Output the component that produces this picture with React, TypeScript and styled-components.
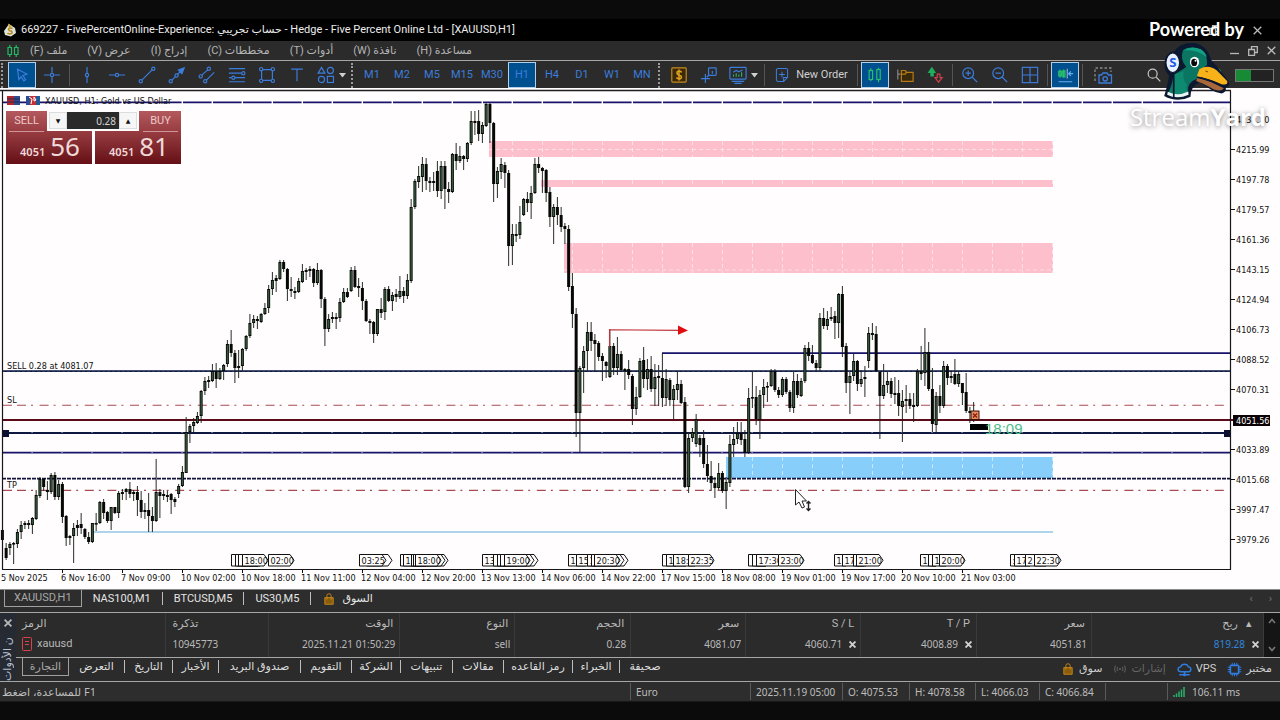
import React from "react";
import styled, { createGlobalStyle, css } from "styled-components";

const uiFont = '"Roboto", "DejaVu Sans", sans-serif';
const numFont = '"Noto Sans", "DejaVu Sans", sans-serif';
const chartFont = '"DejaVu Sans Condensed", "DejaVu Sans", sans-serif';

const Global = createGlobalStyle`
  * { box-sizing: border-box; }
  body { margin: 0; background: #0b0b0b; color: #d4d4d4; font: 11px/16px ${uiFont}; }
  button, input { font: inherit; color: inherit; }
  a { color: inherit; text-decoration: none; }
`;

const Page = styled.div`
  position: relative;
  padding-top: 19px;
  min-width: 1180px;
  overflow: hidden;
`;

const TitleBar = styled.header`
  display: flex;
  align-items: center;
  gap: 4px;
  height: 22px;
  padding: 0 18px 0 3px;
  background: #000;
  color: #ececec;
`;
const TitleText = styled.h1`
  margin: 0;
  flex: 1;
  font-size: 11px;
  font-weight: 400;
`;
const WindowButtons = styled.div`
  display: flex;
  align-items: center;
  gap: ${(p: { $gap: number }) => p.$gap}px;
`;
const GlyphButton = styled.button`
  display: flex;
  padding: 0;
  border: 0;
  background: none;
  color: #b8b8b8;
`;

const MenuBar = styled.nav`
  display: flex;
  align-items: center;
  height: 19px;
  padding: 0 4px 0 7px;
  background: #2b2b2b;
`;
const MenuList = styled.div`
  display: flex;
  flex: 1;
  gap: 20px;
  margin-left: 11px;
`;
const MenuItem = styled.button`
  padding: 0;
  border: 0;
  background: none;
  color: #b4b4b4;
`;

const Toolbar = styled.div`
  display: flex;
  align-items: center;
  height: 28px;
  padding-top: 1px;
  border-top: 1px solid #a6a6a6;
  background: #2b2b2b;
`;
const Grip = styled.span`
  width: 7px;
  height: 25px;
  border-left: 2px dotted #9a9a9a;
  margin-left: 1px;
  margin-right: -1px;
`;
const Divider = styled.span`
  width: 1px;
  height: 22px;
  margin: 0 2px;
  background: #555;
`;
const ToolButton = styled.button<{ $on?: boolean; $w?: number }>`
  display: flex;
  align-items: center;
  justify-content: center;
  gap: 4px;
  width: ${(p) => (p.$w ?? 30) - 2}px;
  height: 26px;
  margin: 0 1px;
  padding: 0;
  border: 1px solid transparent;
  background: none;
  color: #3b7ddd;
  white-space: nowrap;
  ${(p) =>
    p.$on &&
    css`
      border-color: #b5cfe6;
      background: #00508f;
    `}
`;
const OrderLabel = styled.span`
  margin-left: 2px;
  color: #d0d0d0;
`;
const ToolEnd = styled.div`
  display: flex;
  align-items: center;
  gap: 10px;
  margin-left: auto;
  padding-right: 6px;
`;
const SearchSlot = styled.div`
  display: flex;
  margin-right: 36px;
`;
const Battery = styled.div`
  width: 39px;
  height: 13px;
  border: 1px solid #777;
  background: linear-gradient(90deg, #178a35 40%, #222 40%);
`;

const ChartArea = styled.main`
  position: relative;
  background: #fffdfd;
`;
const ChartSvg = styled.svg`
  display: block;
  width: 100%;
  height: auto;
  font: 9px ${chartFont};
`;

const TradePanel = styled.section`
  position: absolute;
  left: 6px;
  top: 23px;
  display: flex;
  gap: 3px;
`;
const DealButton = styled.button<{ $right?: boolean }>`
  display: flex;
  flex-direction: column;
  justify-content: space-between;
  width: 86px;
  height: 53px;
  padding: 2px 3px 0;
  border: 0;
  background: linear-gradient(#b4595d, #963c41 40%, #651016);
  color: #efd9d9;
  align-items: ${(p) => (p.$right ? "flex-end" : "flex-start")};
`;
const DealSide = styled.span`
  width: 35px;
  padding-bottom: 2px;
  border-bottom: 1px solid #cf9497;
  line-height: 16px;
  text-align: center;
  color: #ecc9c9;
`;
const DealPrice = styled.span`
  display: flex;
  align-items: baseline;
  align-self: stretch;
  justify-content: flex-end;
  gap: 5px;
  padding-right: 9px;
  font: 600 11px/28px ${numFont};
  b {
    font: 400 26px/28px ${numFont};
  }
`;
const VolumeBox = styled.div`
  position: absolute;
  left: 41px;
  top: 0;
  display: flex;
  width: 92px;
  height: 20px;
  padding: 1px 2px 2px;
  background: #fffdfd;
`;
const StepButton = styled.button`
  width: 18px;
  padding: 0;
  border: 1px solid #ddd;
  background: #f6f6f6;
  color: #111;
  font-size: 6px;
  line-height: 14px;
`;
const VolumeInput = styled.input`
  flex: 1;
  min-width: 0;
  padding: 0 3px;
  border: 0;
  background: #2a2a2a;
  color: #d5d5d5;
  text-align: right;
  font: 10px ${numFont};
`;

const Brand = styled.aside`
  position: absolute;
  top: 17px;
  right: 14px;
  display: flex;
  flex-direction: column;
  align-items: flex-end;
  color: #fff;
  pointer-events: none;
`;
const BrandTop = styled.span`
  padding-right: 22px;
  font: 700 18px/24px "Lato", sans-serif;
`;
const BrandName = styled.span`
  font: 400 24px/34px "Open Sans", sans-serif;
  color: #fff;
  text-shadow: 0 1px 5px rgba(0, 0, 0, 0.5);
  b {
    font-weight: 700;
  }
`;
const Duck = styled.svg`
  width: 67px;
  height: 59px;
  margin-right: 36px;
`;

const ChartTabs = styled.nav`
  display: flex;
  align-items: flex-start;
  height: 24px;
  padding: 0 8px 0 4px;
  border-top: 1px solid #8a8a8a;
  border-bottom: 1px solid #a6a6a6;
  background: #2d2d2d;
`;
const ChartTab = styled.button<{ $on?: boolean }>`
  display: flex;
  align-items: center;
  gap: 6px;
  height: 17px;
  padding: 0 ${(p) => (p.$on ? 9 : 11)}px;
  border: ${(p) => (p.$on ? "1px solid #a0a0a0" : "0")};
  border-top: 0;
  background: none;
  color: ${(p) => (p.$on ? "#a8a8a8" : "#e6e6e6")};
`;
const TabRule = styled.span`
  width: 1px;
  height: 13px;
  margin-top: 2px;
  background: #bdbdbd;
`;
const TabArrows = styled.div`
  display: flex;
  gap: 16px;
  margin-left: auto;
  color: #777;
  line-height: 18px;
`;

const Toolbox = styled.section`
  display: flex;
  height: 68px;
  background: #2b2b2b;
`;
const SideStrip = styled.div`
  display: flex;
  flex-direction: column;
  align-items: center;
  width: 16px;
  padding-top: 6px;
  overflow: hidden;
  background: #262a33;
  color: #e8e8e8;
`;
const SideLabel = styled.span`
  height: 52px;
  margin-top: 3px;
  overflow: hidden;
  writing-mode: vertical-rl;
  transform: rotate(180deg);
  white-space: nowrap;
  color: #b9c1d0;
  line-height: 14px;
`;
const ToolboxMain = styled.div`
  flex: 1;
  min-width: 0;
`;
const TableRow = styled.div`
  display: flex;
  height: 45px;
  border-bottom: 1px solid #a6a6a6;
`;
const Trades = styled.table`
  flex: 1;
  table-layout: fixed;
  border-collapse: collapse;
  color: #b9b9b9;
  font: 10px/16px ${numFont};
  th,
  td {
    height: 20px;
    padding: 0 4px 2px 6px;
    border-right: 1px solid #3a3a3a;
    text-align: right;
    font-weight: 400;
    white-space: nowrap;
  }
  th {
    padding: 2px 6px 0;
    font: 11px/16px ${uiFont};
  }
  th:nth-child(-n + 2),
  td:nth-child(-n + 2) {
    text-align: left;
  }
`;
const SymbolCell = styled.span`
  display: flex;
  align-items: center;
  gap: 5px;
  font: 11px/16px ${uiFont};
`;
const CloseMark = styled.button`
  margin: 0 0 0 7px;
  padding: 0;
  border: 0;
  background: none;
  color: #d0d0d0;
  svg {
    display: block;
  }
`;
const Profit = styled.span`
  color: #2f86dd;
`;
const ScrollRail = styled.div`
  display: flex;
  flex-direction: column;
  justify-content: space-between;
  align-items: center;
  width: 16px;
  padding: 5px 0;
  background: #151515;
  color: #777;
`;
const BottomTabs = styled.nav`
  display: flex;
  align-items: flex-start;
  height: 23px;
  padding-left: 6px;
`;
const BottomTab = styled.button<{ $on?: boolean; $w: number }>`
  width: ${(p) => p.$w}px;
  height: 18px;
  padding: 0;
  border: ${(p) => (p.$on ? "1px solid #a0a0a0" : "0")};
  border-top: 0;
  background: none;
  color: ${(p) => (p.$on ? "#a8a8a8" : "#dedede")};
  line-height: 16px;
  white-space: nowrap;
`;
const Services = styled.div`
  display: flex;
  gap: 11px;
  margin: 2px 8px 0 auto;
`;
const Service = styled.a<{ $dim?: boolean }>`
  display: flex;
  align-items: center;
  gap: 4px;
  height: 18px;
  color: ${(p) => (p.$dim ? "#666" : "#cfcfcf")};
`;
const ServiceIcon = styled.span`
  display: flex;
  color: #2f7de0;
`;

const StatusBar = styled.footer`
  display: grid;
  grid-template-columns: 630fr 120fr 92fr 67fr 66fr 64fr 66fr 62fr 113fr;
  align-items: center;
  height: 21px;
  border-top: 1px solid #a6a6a6;
  border-bottom: 1px solid #1a1a1a;
  background: #2d2d2d;
  color: #bdbdbd;
  font: 10px/16px ${numFont};
`;
const StatusCell = styled.span`
  display: flex;
  align-items: center;
  gap: 7px;
  height: 17px;
  padding-left: 5px;
  border-left: 1px solid #5a5a5a;
  white-space: nowrap;
  &:first-child {
    padding-left: 2px;
    border-left: 0;
    font-size: 11px;
  }
`;

/* Each candle: wick top, body top, body bottom, wick bottom. */
const CANDLES = `530 530 540 540|543 548 558 560|542 544 548 555|542 543 544 564|529 532 544 548|521 525 532 539|521 523 525 529|520 523 525 529|517 518 525 534|490 495 519 520|477 479 496 498|478 479 487 491|481 490 492 500|473 475 492 494|472 475 497 500|480 484 497 500|482 484 517 523|515 516 538 546|535 536 538 545|523 528 536 563|520 525 528 536|513 524 528 534|528 529 537 539|532 537 542 544|523 523 542 543|513 523 524 531|501 502 523 524|499 502 513 519|511 512 521 523|507 507 521 530|507 507 513 514|491 493 513 518|489 492 494 500|488 489 492 500|482 489 494 498|490 492 494 501|486 492 500 516|491 500 512 518|503 510 512 519|493 510 516 532|507 516 521 532|459 492 521 522|489 492 496 518|490 494 496 500|491 495 497 502|493 494 500 514|497 499 502 507|484 486 494 498|466 472 486 487|417 432 473 473|424 426 432 443|418 422 426 432|412 416 423 424|390 391 416 423|377 381 391 395|376 380 382 388|364 371 381 382|363 371 379 388|368 371 379 380|364 365 371 380|340 344 364 367|330 344 353 357|350 353 368 383|350 366 368 378|348 349 366 371|335 336 349 351|314 323 336 338|315 319 323 328|316 319 321 329|313 314 322 323|303 308 314 315|285 289 308 313|272 280 289 295|275 278 281 292|260 262 279 280|260 262 269 272|268 269 289 301|277 289 291 297|287 291 293 299|278 281 292 293|264 271 282 283|268 270 272 280|266 269 271 277|268 269 283 287|263 270 283 285|269 270 299 308|297 299 329 346|314 319 329 332|312 317 319 323|313 317 319 329|298 302 318 322|288 292 302 303|288 292 297 298|267 270 291 292|266 270 287 288|278 286 288 297|282 288 301 310|299 301 321 322|319 321 323 334|321 322 334 343|309 309 334 336|298 309 313 318|287 289 312 320|286 289 301 302|292 295 301 311|289 294 297 302|276 291 297 299|287 291 296 303|274 280 296 299|199 207 281 283|179 181 207 209|166 176 182 188|157 164 177 192|158 164 181 190|177 181 183 192|172 181 183 191|161 171 191 197|161 166 191 199|161 166 189 209|182 189 192 203|153 154 192 193|143 154 161 170|146 156 161 163|155 156 159 170|142 143 159 162|111 121 143 145|111 121 123 135|110 121 134 141|122 125 134 143|103 104 126 127|103 104 123 143|122 123 184 202|167 171 184 198|158 164 172 179|162 165 173 188|170 173 246 266|224 234 246 265|224 234 236 242|206 222 235 239|198 199 215 216|192 199 203 212|186 193 203 219|158 164 193 194|157 164 168 173|167 168 171 193|169 170 193 202|187 192 217 227|204 207 217 244|197 207 215 225|207 215 227 232|223 226 229 244|225 229 287 291|273 286 314 328|308 314 413 437|366 368 413 452|346 351 368 393|322 332 351 372|322 332 341 351|334 340 344 372|341 343 357 361|353 356 361 381|361 362 366 378|329 346 377 378|343 346 368 375|337 354 368 375|351 354 370 372|368 369 371 390|360 369 375 379|374 376 409 425|387 397 409 415|358 361 397 398|347 360 379 388|359 369 379 390|356 369 389 392|364 377 389 406|365 376 378 406|353 378 398 407|369 379 398 406|378 380 400 406|385 389 400 419|371 384 390 400|380 384 403 404|397 402 487 488|432 438 487 493|428 432 438 442|414 419 444 447|435 438 445 457|430 438 464 468|445 464 476 482|461 476 483 491|477 483 488 498|463 473 488 490|471 473 491 493|477 482 491 509|435 444 483 487|427 439 445 457|422 433 439 444|422 433 440 445|430 439 453 457|388 398 453 454|371 397 398 408|386 397 419 425|390 395 420 439|379 387 395 408|382 386 387 402|369 371 386 387|369 371 390 392|387 390 395 398|377 379 395 397|377 379 392 394|390 392 408 412|371 381 408 413|374 381 395 398|378 381 396 397|345 348 381 383|342 348 356 361|345 355 363 364|360 363 368 371|313 318 368 371|308 318 326 329|311 319 326 330|307 317 319 321|311 316 323 339|293 294 323 338|286 294 347 357|343 346 383 393|372 376 383 414|354 361 376 381|360 361 384 391|370 379 384 387|366 377 379 397|327 333 361 368|323 333 335 340|326 334 371 372|371 372 396 439|364 385 396 399|372 381 385 393|378 381 394 398|377 393 395 404|380 393 406 416|390 401 407 442|385 399 401 413|393 399 406 409|393 405 407 422|369 371 406 407|346 371 374 380|328 352 373 386|342 352 389 391|368 389 424 432|392 396 425 432|385 396 406 413|361 366 406 408|364 366 378 385|372 376 378 383|359 374 384 385|371 374 384 387|383 383 393 405|373 392 411 413|407 411 413 423|402 412 417 422`
  .split("|")
  .map((c) => c.split(" ").map(Number));

function Candles() {
  let close = 530;
  return (
    <g>
      {CANDLES.map(([hi, top, bottom, lo], i) => {
        const x = 2.4 + i * 3.75;
        const up = Math.abs(bottom - close) < Math.abs(top - close);
        close = up ? top : bottom;
        const h = Math.max(bottom - top, 1.6);
        return (
          <g key={i}>
            <line x1={x} x2={x} y1={hi} y2={lo} stroke="#1c221c" strokeWidth={0.95} />
            <rect x={x - 1.5} y={top} width={3} height={h} fill="#050805" />
            {up && h > 3 && <rect x={x - 0.7} y={top + 1} width={1.4} height={h - 2} fill="#35563b" />}
          </g>
        );
      })}
    </g>
  );
}

/* Economic events: left edge, label, right edge. */
const EVENTS: [number, string, number][] = [
  [231, "", 262], [235, "", 262], [238, "", 264], [242, "18:00", 268], [268, "02:00", 294],
  [366, "", 392], [359, "03:25", 386],
  [400, "", 430], [403, "1", 430], [411, "", 448], [413, "", 445], [415, "18:00", 441],
  [482, "13", 510], [493, "", 520], [497, "", 538], [500, "", 534], [504, "19:00", 530],
  [568, "1", 590], [576, "15", 600], [587, "1", 628], [591, "", 624], [594, "20:30", 620],
  [662, "", 680], [666, "1", 690], [673, "18:", 699], [688, "22:35", 714],
  [748, "", 770], [752, "", 770], [756, "17:30", 782], [778, "23:00", 804],
  [834, "1", 850], [842, "17", 868], [853, "", 870], [856, "21:00", 883],
  [920, "1", 940], [928, "", 940], [932, "1", 950], [939, "20:00", 965],
  [1010, ":", 1030], [1014, "17", 1034], [1025, "2", 1050], [1034, "22:30", 1061],
];

const PRICES = ["4234.20", "4215.99", "4197.78", "4179.57", "4161.36", "4143.15", "4124.94", "4106.73", "4088.52", "4070.31", "", "4033.89", "4015.68", "3997.47", "3979.26"];
const TIMES = ["5 Nov 2025", "6 Nov 16:00", "7 Nov 09:00", "10 Nov 02:00", "10 Nov 18:00", "11 Nov 11:00", "12 Nov 04:00", "12 Nov 20:00", "13 Nov 13:00", "14 Nov 06:00", "14 Nov 22:00", "17 Nov 15:00", "18 Nov 08:00", "19 Nov 01:00", "19 Nov 17:00", "20 Nov 10:00", "21 Nov 03:00"];
const GRID = Array.from({ length: 41 }, (_, i) => 32 + i * 30).filter((x) => x < 1230);

const ZONES = [
  { x: 489, y: 141, h: 16, fill: "#fdbfcc", mid: 149.5 },
  { x: 541, y: 180, h: 7, fill: "#fdbfcc", mid: 0 },
  { x: 564, y: 243, h: 30, fill: "#fdbfcc", mid: 270 },
  { x: 726, y: 457, h: 21, fill: "#87cefa", mid: 0 },
];

function PriceChart() {
  return (
    <ChartSvg viewBox="0 88 1280 501" role="img" aria-label="XAUUSD H1">
      <rect x="0" y="88" width="1280" height="501" fill="#fffdfd" />
      <path d="M0 90.5H1231" stroke="#221c22" strokeWidth="1.4" />
      {ZONES.map((z) => (
        <g key={z.y}>
          <rect x={z.x} y={z.y} width={1053 - z.x} height={z.h} fill={z.fill} />
          {z.mid > 0 && <line x1={z.x} x2={1053} y1={z.mid} y2={z.mid} stroke="#ffe6ea" strokeOpacity="0.8" strokeDasharray="4 3" />}
          {GRID.filter((x) => x > z.x && x < 1060).map((x) => (
            <line key={x} x1={x + 0.5} x2={x + 0.5} y1={z.y} y2={z.y + z.h} stroke="#fff" strokeOpacity="0.5" strokeDasharray="4 3" />
          ))}
        </g>
      ))}
      <path d="M93 532H1053" stroke="#93c6e6" strokeWidth="1.6" />
      <g stroke="#17136b" strokeWidth="1.8">
        <path d="M2 102.3H1231M662 353.2H1231M2 452.7H1231" />
        <path d="M2 371.2H1231M2 433H1231" stroke="#0d1740" />
        <path d="M2 478.7H1231" stroke="#12123f" strokeDasharray="4 1" />
      </g>
      <path d="M2 371.2H1231" stroke="#47607c" strokeWidth="0.6" strokeDasharray="3 2" />
      {GRID.map((x) => (
        <g key={x} fill="#fffdfd">
          <rect x={x - 0.4} y={101} width={1.4} height={3} />
          <rect x={x - 0.4} y={432} width={1} height={1} fillOpacity="0.7" />
          <rect x={x - 0.4} y={452} width={1} height={1} fillOpacity="0.7" />
        </g>
      ))}
      <g stroke="#a94b55" strokeWidth="1.1" strokeDasharray="9 5 2 6.6">
        <path d="M17 405.3H1226M17 490.4H1226" />
        <path d="M2 405.3H12M2 490.4H12" strokeDasharray="none" />
      </g>
      <path d="M2 420H1233" stroke="#5c0a17" strokeWidth="1.8" />
      <Candles />
      <g fill="#0b1033">
        <rect x="2" y="430" width="7" height="7" />
        <rect x="1224" y="430" width="7" height="7" />
      </g>
      <path d="M609.5 347V329.7L680 330.4" fill="none" stroke="#c0343b" strokeWidth="1.1" />
      <path d="M678 325.5L688 330.4L678 334.8Z" fill="#e00d10" />
      <g>
        <rect x="971" y="411" width="8" height="8.5" fill="#e98a5c" stroke="#3a1408" />
        <path d="M973 413.5l4 4m0-4l-4 4" stroke="#8a1a10" strokeWidth="1.2" />
        <rect x="970" y="424" width="18" height="6" fill="#000" />
        <text x="985" y="433.5" fill="#4dbd8a" fontFamily='"Liberation Sans", sans-serif' fontSize="15">18:09</text>
      </g>
      <g fill="#111">
        <text x="7" y="369">SELL 0.28 at 4081.07</text>
        <text x="7" y="403">SL</text>
        <text x="7" y="488">TP</text>
        <text x="45" y="104">XAUUSD, H1: Gold vs US Dollar</text>
      </g>
      <g>
        <rect x="7" y="96" width="13" height="9" fill="#b3262f" />
        <rect x="14" y="96" width="6" height="9" fill="#2c4c8d" />
        <path d="M7 99h13M7 102h13" stroke="#222a55" />
        <rect x="26" y="96" width="4" height="9" fill="#2c4c8d" />
        <rect x="30" y="96" width="6" height="9" fill="#c2303a" />
        <rect x="36" y="96" width="4" height="9" fill="#205a96" />
        <path d="M29 97l3 2-1 5M34 97l2 3-2 1z" stroke="#fff" fill="none" />
      </g>
      <path d="M2.5 91V569.5M1230.5 91V569.5M2 569.5H1231" stroke="#16161a" strokeWidth="1.2" fill="none" />
      {EVENTS.map(([x, label, end]) => (
        <g key={x}>
          <path d={`M${x + 0.5} 554.5H${end - 4}L${end} 560.3L${end - 4} 566H${x + 0.5}Z`} fill="#fffdfd" stroke="#111" />
          {label && <text x={x + 2.5} y="563.6" fill="#111">{label}</text>}
        </g>
      ))}
      {TIMES.map((t, i) => (
        <g key={t}>
          {i > 0 && <path d={`M${2.5 + i * 60} 569V573`} stroke="#111" />}
          <text x={1 + i * 60} y="581" fill="#111">{t}</text>
        </g>
      ))}
      {PRICES.map((p, i) =>
        p ? (
          <g key={p}>
            <path d={`M1230 ${119.5 + i * 30}H1235`} stroke="#111" />
            <text x="1236" y={122.7 + i * 30} fill="#111">{p}</text>
          </g>
        ) : null
      )}
      <rect x="1233" y="415" width="37" height="11" fill="#0a0204" />
      <text x="1236" y="423.7" fill="#fff">4051.56</text>
      <g stroke="#222" fill="#fff" strokeWidth="1">
        <path d="M795.5 489.5V505L799 502L802 508L804.5 507L802 501H806.5Z" />
        <path d="M808.5 502V510M806.5 503.5L808.5 501.5L810.5 503.5M806.5 508.5L808.5 510.5L810.5 508.5" fill="none" strokeWidth="1.4" />
      </g>
    </ChartSvg>
  );
}

const ICONS: Record<string, React.ReactNode> = {
  cursor: <path d="M5 3.500L15.500 9L11 10.500L14 15L12 16.500L9 12L6.500 15Z" />,
  cross: <><path d="M10 1V7.500M10 12.500V19M1 10H7.500M12.500 10H19" /><circle cx="10" cy="10" r="1.800" /></>,
  vline: <><path d="M10 1V8M10 12V19" /><circle cx="10" cy="10" r="1.800" /></>,
  hline: <><path d="M1 10H8M12 10H19" /><circle cx="10" cy="10" r="1.800" /></>,
  trend: <><path d="M4.300 15.700L15.700 4.300" /><circle cx="3" cy="17" r="1.800" /><circle cx="17" cy="3" r="1.800" /></>,
  arrow: <><path d="M4.300 15.700L8.200 11.800M10.800 9.200L15 5" /><path d="M18 2L11.500 4.500L15.500 8.500Z" fill="currentColor" /><circle cx="3" cy="17" r="1.800" /><circle cx="9.500" cy="10.500" r="1.800" /></>,
  channel: <><path d="M4.200 10.200L10.800 4.300M9.300 15.700L18 7" /><circle cx="3" cy="11.500" r="1.800" /><circle cx="12" cy="3" r="1.800" /><circle cx="8" cy="17" r="1.800" /></>,
  fibo: <><path d="M1 3H19M1 8H15M1 13H4M8 13H19M1 17.500H19" /><circle cx="17" cy="8" r="1.800" /><circle cx="6" cy="13" r="1.800" /></>,
  rect: <><path d="M4 5.500V14.500M16 5.500V14.500M5.500 4H14.500M5.500 16H14.500" /><circle cx="3.500" cy="3.500" r="1.800" /><circle cx="16.500" cy="3.500" r="1.800" /><circle cx="3.500" cy="16.500" r="1.800" /><circle cx="16.500" cy="16.500" r="1.800" /></>,
  text: <path d="M3.500 3.500H16.500M10 3.500V17" />,
  shapes: <><path d="M5 1.500L8.800 8H1.200Z" /><circle cx="14.800" cy="5" r="3.400" /><circle cx="5" cy="15" r="3.400" /><rect x="11.500" y="11.500" width="6.800" height="6.800" /></>,
  dollar: <><rect x="2" y="2" width="16" height="16" rx="1" stroke="#c98a1b" fill="#3a2a0a" /><path d="M13 7Q10 4.500 8 6.500Q7 9 10 10Q13.500 11 12.500 13.500Q10 15.500 7 13M10 4V16" stroke="#e0a020" strokeWidth="1.700" /></>,
  info: <><rect x="9.500" y="2" width="8.500" height="8.500" rx="1" /><path d="M13.700 5.500V8.500M6 9V19M1 14H11M7.500 12.500L10 10" /></>,
  monitor: <><rect x="1" y="1.500" width="18" height="13" rx="1" /><path d="M3 17H17M6 19.300H14" /><path d="M5 12V9.500M8 12V8M11 12V9.500M14 12V7" stroke="#2fae66" /><path d="M4.500 7L8 5L11 6.500L15 4.500" /></>,
  order: <><path d="M3 4Q3 2 5 2H15Q17 2 17 4V13L12 18H5Q3 18 3 16ZM17 13H12V18M10 6V13M6.500 9.500H13.500" /></>,
  candles: <g stroke="#27c06d"><rect x="3.500" y="5" width="3.800" height="10" /><rect x="12" y="4" width="3.800" height="11" /><path d="M5.400 2.500V5M5.400 15V17M13.900 2V4M13.900 15V18" /></g>,
  folder: <g stroke="#b97a14"><path d="M6 17V5H10L12 7H19V17ZM6 9H11M11 5V9" fill="#3a2a0a" /><path d="M2 4V15M2 9H5" stroke="#888" /></g>,
  updown: <><path d="M5.500 11V7H3L6.500 2L10 7H8V11Z" stroke="#1fae5b" fill="#1fae5b" /><path d="M12.500 9V13H10L14 18L18 13H15.500V9Z" stroke="#d33f49" /></>,
  zoomIn: <><circle cx="8" cy="8" r="6" /><path d="M12.500 12.500L18 18M8 5V11M5 8H11" /></>,
  zoomOut: <><circle cx="8" cy="8" r="6" /><path d="M12.500 12.500L18 18M5 8H11" /></>,
  tiles: <><rect x="1.500" y="1.500" width="17" height="17" /><path d="M10 2V18M2 10H18" /></>,
  shift: <><path d="M4.500 4V13M8.500 4V13M3 6H6V11H3ZM7.500 5.500H10V12H7.500Z" stroke="#27c06d" /><path d="M12.500 3V14" stroke="#9ab" /><path d="M19 8.500H14M16.500 6L14 8.500L16.500 11M3 17.500H18" stroke="#69aef2" /></>,
  camera: <><path d="M2 16V3H18V7" strokeDasharray="2.500 2" stroke="#8a8a8a" /><path d="M6 10H8.500L10 8H14L15.500 10H18.500V18H6Z" /><circle cx="12.200" cy="13.800" r="2.200" /></>,
  search: <g stroke="#c8c8c8"><circle cx="8.500" cy="8.500" r="5" /><path d="M12.500 12.500L17 17" /></g>,
  pin: <g stroke="#1fae5b"><circle cx="10" cy="7" r="4.500" /><path d="M10 11V16M8 6.500L10 4.500L12 6.500M10 4.500V9" /></g>,
  bag: <g stroke="#c98a1b"><path d="M4 8H16V17.500H4Z" fill="#8a5c0c" /><path d="M7 11V5Q7 2.500 10 2.500Q13 2.500 13 5V11" /></g>,
  cloud: <><path d="M5.500 13Q1.500 13 1.500 9.500Q1.500 6.500 5 6.500Q6 3 10 3Q14 3 15 6.500Q18.500 6.500 18.500 10Q18.500 13 15 13ZM10 13V16.500M3 17H17" strokeWidth="1.900" /><circle cx="10" cy="17" r="1.500" fill="currentColor" /></>,
  chip: <><rect x="4.500" y="4.500" width="11" height="11" rx="1" strokeWidth="2.200" /><path d="M7 1V4M10 1V4M13 1V4M7 16V19M10 16V19M13 16V19M1 7H4M1 10H4M1 13H4M16 7H19M16 10H19M16 13H19" /></>,
  signal: <g stroke="#666"><circle cx="10" cy="10" r="1" /><path d="M6.500 7Q5 10 6.500 13M13.500 7Q15 10 13.500 13M3.500 5Q1 10 3.500 15M16.500 5Q19 10 16.500 15" /></g>,
};

function Icon({ name, size = 18 }: { name: string; size?: number }) {
  return (
    <svg width={size} height={size} viewBox="0 0 20 20" fill="none" stroke="currentColor" strokeWidth="1.3" aria-hidden="true">
      {ICONS[name]}
    </svg>
  );
}
const Caret = () => (
  <svg width="7" height="5" viewBox="0 0 7 5" aria-hidden="true"><path d="M0 0H7L3.500 4.500Z" fill="#d0d0d0" /></svg>
);
const Cross = ({ size = 9, weight = 1.3 }: { size?: number; weight?: number }) => (
  <svg width={size} height={size} viewBox="0 0 9 9" stroke="currentColor" strokeWidth={weight} aria-hidden="true"><path d="M0.700 0.700L8.300 8.300M8.300 0.700L0.700 8.300" /></svg>
);
const Restore = () => (
  <svg width="10" height="10" viewBox="0 0 10 10" fill="none" stroke="currentColor" strokeWidth="1.300" aria-hidden="true"><path d="M3.500 3.500V0.700H9.300V6.500H6.500M0.700 3.500H6.500V9.300H0.700Z" /></svg>
);
const Remove = ({ label }: { label: string }) => (
  <CloseMark aria-label={label}><Cross size={7} weight={2.4} /></CloseMark>
);

const MENUS = ["ملف (F)", "عرض (V)", "إدراج (I)", "مخططات (C)", "أدوات (T)", "نافذة (W)", "مساعدة (H)"];
const DRAW_TOOLS = ["vline", "hline", "trend", "arrow", "channel", "fibo", "rect", "text"];
const FRAMES = ["M1", "M2", "M5", "M15", "M30", "H1", "H4", "D1", "W1", "MN"];
const COLS = [150, 103, 131, 115, 116, 115, 115, 116, 115, 172];
const HEADS = ["الرمز", "تذكرة", "الوقت", "النوع", "الحجم", "سعر", "S / L", "T / P", "سعر"];
const TABS: [string, number][] = [["التجارة", 47], ["التعرض", 55], ["التاريخ", 47], ["الأخبار", 45], ["صندوق البريد", 81], ["التقويم", 50], ["الشركة", 48], ["تنبيهات", 51], ["مقالات", 50], ["رمز القاعده", 68], ["الخبراء", 46], ["صحيفة", 50]];

export default function App() {
  return (
    <Page>
      <Global />
      <TitleBar>
        <svg width="14" height="14" viewBox="0 0 14 14" aria-hidden="true">
          <path d="M6 1L12 5L13 10L8 13.500L2 12L1 8Z" fill="#d9e2d8" />
          <path d="M5 0.500L9 3L6 5Z" fill="#d0a63a" />
          <path d="M9.500 5.500Q6 4 5.500 6.500Q6 8 8 8Q10 9 8.500 10.500Q6 11.500 4.500 10" fill="none" stroke="#b98418" strokeWidth="1.500" />
        </svg>
        <TitleText>669227 - FivePercentOnline-Experience: حساب تجريبي - Hedge - Five Percent Online Ltd - [XAUUSD,H1]</TitleText>
        <WindowButtons $gap={34}>
          <GlyphButton aria-label="Restore window"><Restore /></GlyphButton>
          <GlyphButton aria-label="Close window"><Cross /></GlyphButton>
        </WindowButtons>
      </TitleBar>
      <MenuBar>
        <svg width="12" height="14" viewBox="0 0 12 14" fill="none" stroke="#24b765" strokeWidth="1.200" aria-hidden="true">
          <path d="M1 3.500H4.500V10.500H1ZM7.500 3.500H11V10.500H7.500ZM2.800 1V3.500M2.800 10.500V13M9.200 1V3.500M9.200 10.500V13" />
        </svg>
        <MenuList>
          {MENUS.map((m) => <MenuItem key={m} dir="rtl">{m}</MenuItem>)}
        </MenuList>
        <WindowButtons $gap={9}>
          <GlyphButton aria-label="Minimize chart"><svg width="9" height="9" viewBox="0 0 9 9" aria-hidden="true"><path d="M0 7.500H9" stroke="currentColor" strokeWidth="1.300" /></svg></GlyphButton>
          <GlyphButton aria-label="Restore chart"><Restore /></GlyphButton>
          <GlyphButton aria-label="Close chart"><Cross /></GlyphButton>
        </WindowButtons>
      </MenuBar>
      <Toolbar>
        <Grip />
        <ToolButton $on aria-label="cursor"><Icon name="cursor" /></ToolButton>
        <ToolButton aria-label="crosshair"><Icon name="cross" /></ToolButton>
        <Divider />
        {DRAW_TOOLS.map((t) => <ToolButton key={t} aria-label={t}><Icon name={t} /></ToolButton>)}
        <ToolButton $w={38} aria-label="shapes"><Icon name="shapes" /><Caret /></ToolButton>
        <Grip />
        {FRAMES.map((f) => <ToolButton key={f} $on={f === "H1"}>{f}</ToolButton>)}
        <Grip />
        <ToolButton aria-label="symbols"><Icon name="dollar" /></ToolButton>
        <ToolButton aria-label="data window"><Icon name="info" /></ToolButton>
        <ToolButton $w={38} aria-label="indicators"><Icon name="monitor" /><Caret /></ToolButton>
        <Divider />
        <ToolButton $w={88}><Icon name="order" size={16} /><OrderLabel>New Order</OrderLabel></ToolButton>
        <Divider />
        <ToolButton $on aria-label="candlesticks"><Icon name="candles" /></ToolButton>
        <ToolButton aria-label="profiles"><Icon name="folder" /></ToolButton>
        <ToolButton aria-label="trade levels"><Icon name="updown" /></ToolButton>
        <Divider />
        <ToolButton aria-label="zoom in"><Icon name="zoomIn" /></ToolButton>
        <ToolButton aria-label="zoom out"><Icon name="zoomOut" /></ToolButton>
        <ToolButton aria-label="tile windows"><Icon name="tiles" /></ToolButton>
        <Divider />
        <ToolButton $on aria-label="chart shift"><Icon name="shift" /></ToolButton>
        <Divider />
        <ToolButton $w={36} aria-label="screenshot"><Icon name="camera" size={20} /></ToolButton>
        <ToolEnd>
          <SearchSlot><Icon name="search" /></SearchSlot>
          <Icon name="pin" size={16} />
          <Battery />
        </ToolEnd>
      </Toolbar>
      <ChartArea>
        <PriceChart />
        <TradePanel>
          <DealButton>
            <DealSide>SELL</DealSide>
            <DealPrice>4051<b>56</b></DealPrice>
          </DealButton>
          <DealButton $right>
            <DealSide>BUY</DealSide>
            <DealPrice>4051<b>81</b></DealPrice>
          </DealButton>
          <VolumeBox>
            <StepButton aria-label="decrease">▼</StepButton>
            <VolumeInput aria-label="Volume" defaultValue="0.28" />
            <StepButton aria-label="increase">▲</StepButton>
          </VolumeBox>
        </TradePanel>
      </ChartArea>
      <ChartTabs>
        <ChartTab $on>XAUUSD,H1</ChartTab>
        <ChartTab>NAS100,M1</ChartTab>
        <TabRule />
        <ChartTab>BTCUSD,M5</ChartTab>
        <TabRule />
        <ChartTab>US30,M5</ChartTab>
        <TabRule />
        <ChartTab><Icon name="bag" size={14} />السوق</ChartTab>
        <TabArrows><span>‹</span><span>›</span></TabArrows>
      </ChartTabs>
      <Toolbox>
        <SideStrip>
          <GlyphButton aria-label="Close toolbox"><Cross size={8} weight={2} /></GlyphButton>
          <SideLabel>ن الأدوات</SideLabel>
        </SideStrip>
        <ToolboxMain>
          <TableRow>
            <Trades>
              <colgroup>{COLS.map((w, i) => <col key={i} width={w} />)}</colgroup>
              <thead>
                <tr>
                  {HEADS.map((h, i) => <th key={i}>{h}</th>)}
                  <th><bdi>ربح</bdi> &nbsp; ▴ &nbsp;</th>
                </tr>
              </thead>
              <tbody>
                <tr>
                  <td>
                    <SymbolCell>
                      <svg width="10" height="14" viewBox="0 0 10 14" fill="none" stroke="#d8434b" aria-hidden="true"><rect x="0.500" y="0.500" width="9" height="13" rx="1" /><path d="M3 4.500H7M3 7.500H7" /></svg>
                      xauusd
                    </SymbolCell>
                  </td>
                  <td>10945773</td>
                  <td>2025.11.21 01:50:29</td>
                  <td>sell</td>
                  <td>0.28</td>
                  <td>4081.07</td>
                  <td>4060.71<Remove label="remove stop loss" /></td>
                  <td>4008.89<Remove label="remove take profit" /></td>
                  <td>4051.81</td>
                  <td><Profit>819.28</Profit><Remove label="close position" /></td>
                </tr>
              </tbody>
            </Trades>
            <ScrollRail>
              <svg width="8" height="6" viewBox="0 0 8 6" fill="none" stroke="currentColor" strokeWidth="1.600" aria-hidden="true"><path d="M1 5L4 1.500L7 5" /></svg>
              <svg width="8" height="6" viewBox="0 0 8 6" fill="none" stroke="currentColor" strokeWidth="1.600" aria-hidden="true"><path d="M1 1L4 4.500L7 1" /></svg>
            </ScrollRail>
          </TableRow>
          <BottomTabs>
            {TABS.map(([t, w], i) => (
              <React.Fragment key={t}>
                {i > 1 && <TabRule />}
                <BottomTab $on={i === 0} $w={w}>{t}</BottomTab>
              </React.Fragment>
            ))}
            <Services>
              <Service href="#market"><Icon name="bag" size={14} />سوق</Service>
              <Service href="#signals" $dim><Icon name="signal" size={14} />إشارات</Service>
              <Service href="#vps"><ServiceIcon><Icon name="cloud" size={15} /></ServiceIcon>VPS</Service>
              <Service href="#tester"><ServiceIcon><Icon name="chip" size={15} /></ServiceIcon>مختبر</Service>
            </Services>
          </BottomTabs>
        </ToolboxMain>
      </Toolbox>
      <StatusBar>
        <StatusCell>للمساعدة، اضغط F1</StatusCell>
        <StatusCell>Euro</StatusCell>
        <StatusCell>2025.11.19 05:00</StatusCell>
        <StatusCell>O: 4075.53</StatusCell>
        <StatusCell>H: 4078.58</StatusCell>
        <StatusCell>L: 4066.03</StatusCell>
        <StatusCell>C: 4066.84</StatusCell>
        <StatusCell />
        <StatusCell>
          <svg width="12" height="10" viewBox="0 0 12 10" stroke="#27b36b" strokeWidth="1.500" aria-hidden="true"><path d="M1 10V8M3.500 10V6.500M6 10V4.500M8.500 10V2.500M11 10V0" /></svg>
          106.11 ms
        </StatusCell>
      </StatusBar>
      <Brand>
        <BrandTop>Powered by</BrandTop>
        <Duck viewBox="368 93 202 179" aria-hidden="true">
          <path d="M371 260Q382 225 386 198Q366 180 374 145Q382 125 402 124Q420 96 462 99Q502 107 513 150L532 172L566 214Q573 230 557 234Q562 246 545 252Q530 252 515 242L478 218Q450 232 451 262Q410 282 371 260Z" fill="#0c1830" />
          <path d="M384 250Q396 222 400 196L438 172Q418 150 428 120Q450 106 480 118Q504 134 501 166Q482 178 474 206Q440 218 443 246Q410 262 384 250Z" fill="#0a7561" />
          <path d="M430 122Q452 106 482 118Q498 128 500 142Q470 118 430 122Z" fill="#13a082" />
          <path d="M400 195L430 185Q426 215 440 225Q436 240 442 248Q420 258 400 254Z" fill="#0e8a70" />
          <path d="M382 247Q410 262 444 246L445 256Q410 272 380 256Z" fill="#e9f4f4" />
          <ellipse cx="397" cy="159" rx="21" ry="30" fill="#e8f0ff" stroke="#0c1830" strokeWidth="4" />
          <text x="397" y="173" textAnchor="middle" fontFamily='"Open Sans", sans-serif' fontWeight="700" fontSize="40" fill="#1d56e8">S</text>
          <path d="M400 190V264" stroke="#0c1830" strokeWidth="5" />
          <ellipse cx="463" cy="157" rx="14" ry="16" fill="#fff" />
          <ellipse cx="462" cy="158" rx="9" ry="11" fill="#06080c" />
          <circle cx="466" cy="153" r="3" fill="#fff" />
          <path d="M478 178Q506 162 530 182L562 214Q566 228 545 224Q505 206 470 200Z" fill="#f7b21a" />
          <path d="M472 204Q512 215 552 236Q545 248 522 240Q492 222 468 214Z" fill="#a8683c" />
          <path d="M470 203Q512 210 552 232" fill="none" stroke="#0c1830" strokeWidth="4" />
          <path d="M496 184l8 3" stroke="#7a4a08" strokeWidth="3" />
        </Duck>
        <BrandName>Stream<b>Yard</b></BrandName>
      </Brand>
    </Page>
  );
}
